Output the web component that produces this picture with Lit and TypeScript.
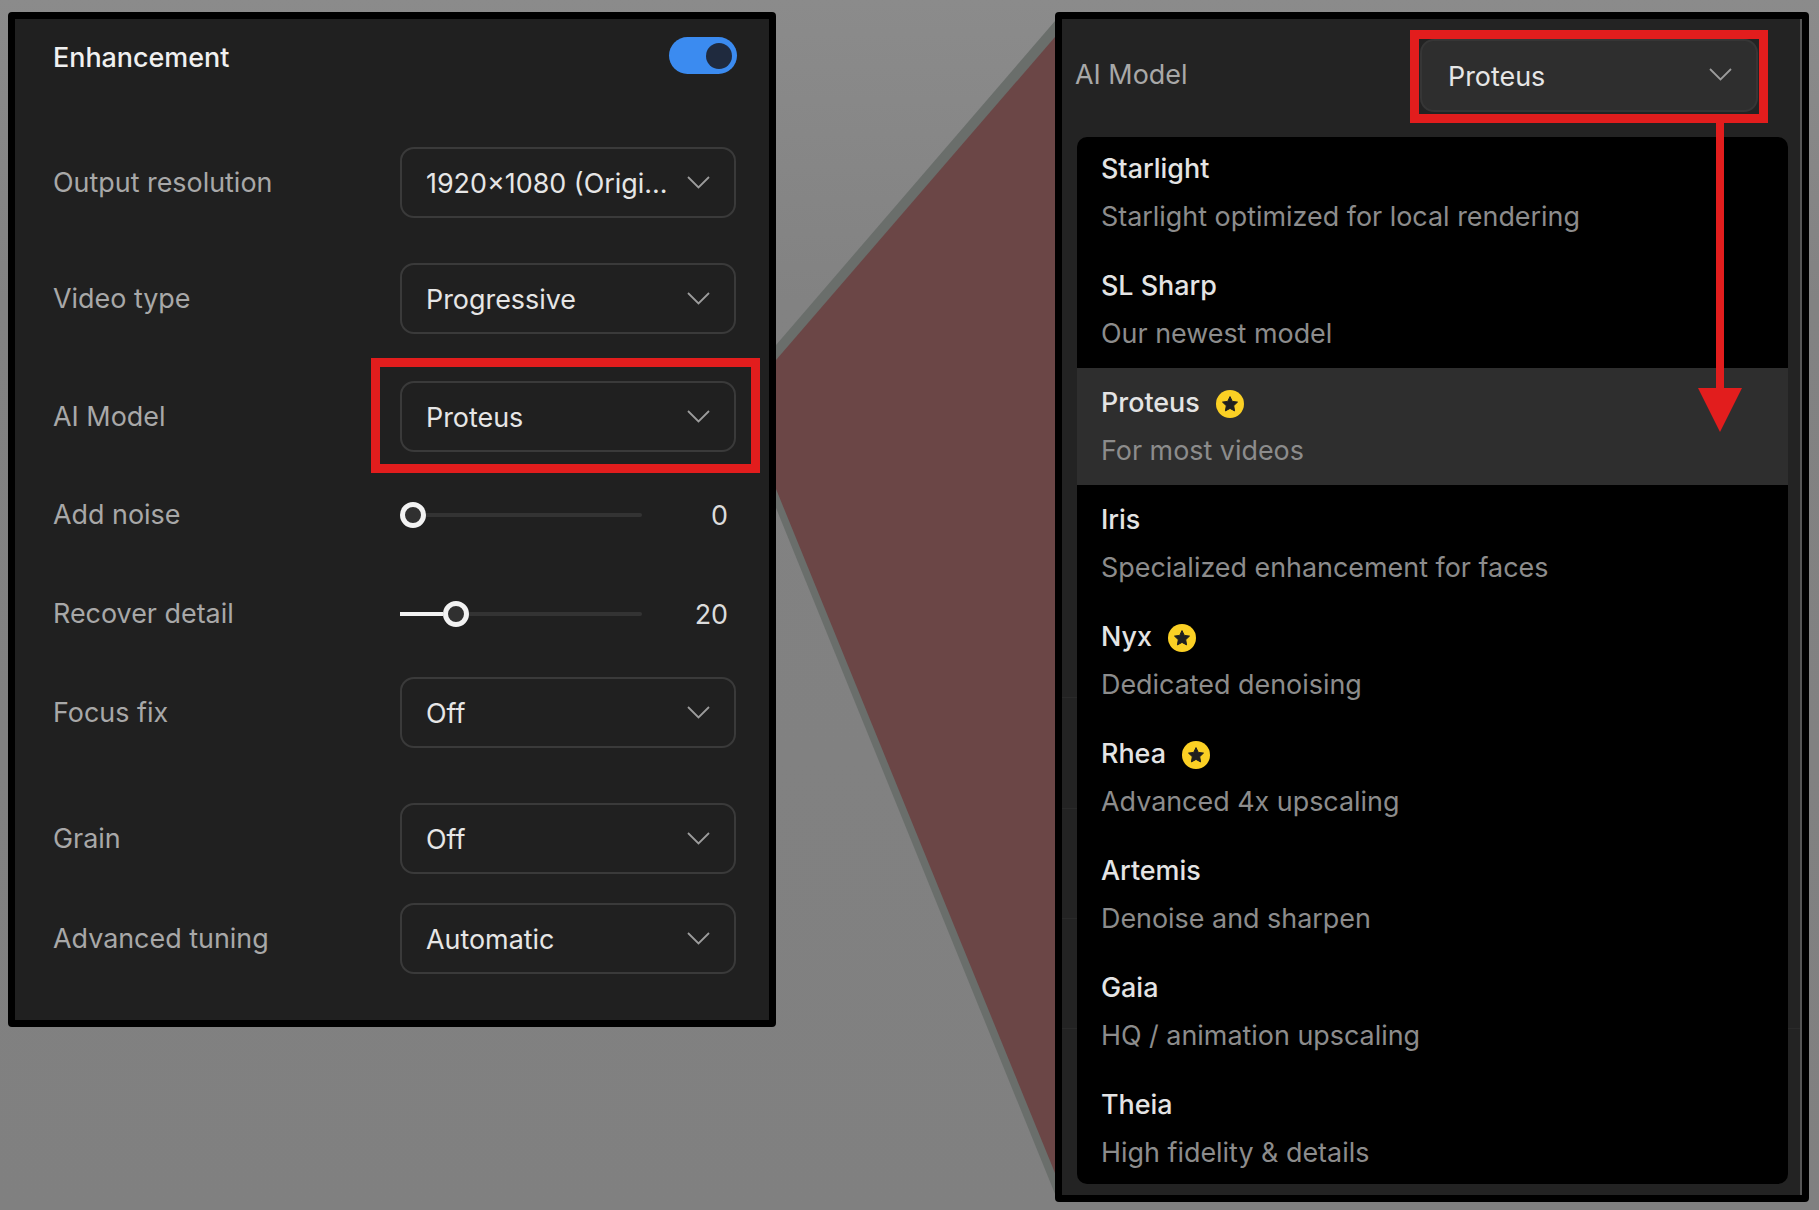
import { LitElement, html, css, svg } from "lit";
import { customElement } from "lit/decorators.js";

const chevron = html`<svg class="chev" viewBox="0 0 23 13" width="23" height="13"><path d="M1 1 L11.5 11.5 L22 1" fill="none" stroke="#9c9c9c" stroke-width="1.8"/></svg>`;
const star = html`<svg class="badge" viewBox="0 0 28 28" width="28" height="28"><circle cx="14" cy="14" r="14" fill="#fbd024"/><path d="M14 6.6l2.3 4.8 5.2.7-3.8 3.6.9 5.2-4.6-2.5-4.6 2.5.9-5.2-3.8-3.6 5.2-.7z" fill="#1f1f1f" stroke="#1f1f1f" stroke-width="1" stroke-linejoin="round"/></svg>`;

type Row = { label: string; value?: string; slider?: number; marked?: boolean };
const rows: Row[] = [
  { label: "Output resolution", value: "1920×1080 (Origi..." },
  { label: "Video type", value: "Progressive" },
  { label: "AI Model", value: "Proteus", marked: true },
  { label: "Add noise", slider: 0 },
  { label: "Recover detail", slider: 20 },
  { label: "Focus fix", value: "Off" },
  { label: "Grain", value: "Off" },
  { label: "Advanced tuning", value: "Automatic" },
];
const models = [
  { t: "Starlight", d: "Starlight optimized for local rendering" },
  { t: "SL Sharp", d: "Our newest model" },
  { t: "Proteus", d: "For most videos", star: true, active: true },
  { t: "Iris", d: "Specialized enhancement for faces" },
  { t: "Nyx", d: "Dedicated denoising", star: true },
  { t: "Rhea", d: "Advanced 4x upscaling", star: true },
  { t: "Artemis", d: "Denoise and sharpen" },
  { t: "Gaia", d: "HQ / animation upscaling" },
  { t: "Theia", d: "High fidelity & details" },
];

@customElement("app-root")
export class AppRoot extends LitElement {
  static styles = css`
    :host {
      display: block; position: relative; width: 1819px; height: 1210px; overflow: hidden;
      background: linear-gradient(#8b8b8b 0, #828282 300px, #808080 100%);
      font-family: Inter, "Liberation Sans", sans-serif; font-size: 26.9px;
    }
    .page { position: relative; display: flex; gap: 279px; padding: 12px 0 0 8px; align-items: flex-start; }
    .connector { position: absolute; inset: 0; }
    .panel { box-sizing: border-box; border: 7px solid #000; border-radius: 4px; background: #202020; }
    .left { width: 768px; height: 1015px; padding: 18px 33px 0 38px; }
    .head { display: flex; justify-content: space-between; align-items: center; height: 37px; margin-right: -1px; }
    .title { color: #f0f0f0; font-weight: 500; margin-top: 2px; }
    .toggle { width: 68px; height: 37px; border-radius: 19px; background: #3b8bf0; display: flex; align-items: center; justify-content: flex-end; padding-right: 5px; box-sizing: border-box; }
    .knob { width: 26px; height: 26px; border-radius: 50%; background: #1f2a3e; }
    .row { display: grid; grid-template-columns: 1fr 336px; align-items: center; }
    .row:nth-of-type(2) { margin-top: 73px; }
    .row:nth-of-type(3) { margin-top: 45px; }
    .row:nth-of-type(4) { margin-top: 47px; }
    .row:nth-of-type(5) { margin-top: 50px; }
    .row:nth-of-type(6) { margin-top: 73px; }
    .row:nth-of-type(7) { margin-top: 50px; }
    .row:nth-of-type(8) { margin-top: 55px; }
    .row:nth-of-type(9) { margin-top: 29px; }
    .label { color: #a8a8a8; margin-top: -2px; line-height: 26px; }
    .select {
      position: relative; box-sizing: border-box; height: 71px; border: 2px solid #3a3a3a; border-radius: 14px;
      display: flex; align-items: center; justify-content: space-between; padding: 1px 24px 0 24px; color: #e6e6e6;
    }
    .chev { margin-top: -2px; flex: none; }
    .mark { position: absolute; left: -31px; right: -26px; top: -25px; bottom: -23px; border: 9px solid #e21d1d; pointer-events: none; }
    .slider { display: flex; align-items: center; justify-content: space-between; height: 26px; padding-right: 8px; }
    .track { position: relative; width: 242px; height: 4px; background: #333; border-radius: 2px; }
    .fill { position: absolute; left: 0; top: 0; height: 4px; background: #f2f2f2; }
    .thumb { position: absolute; top: -11px; box-sizing: border-box; width: 26px; height: 26px; border: 5px solid #f2f2f2; border-radius: 50%; background: #303030; }
    .num { color: #dcdcdc; }
    .right { position: relative; width: 754px; height: 1190px; padding: 20px 0 0 0;
      background:
        linear-gradient(#2a2a2a, #2a2a2a) 0 678px / 15px 1px no-repeat,
        linear-gradient(#2a2a2a, #2a2a2a) 0 789px / 15px 1px no-repeat,
        linear-gradient(#2a2a2a, #2a2a2a) 0 899px / 15px 1px no-repeat,
        linear-gradient(#2a2a2a, #2a2a2a) 0 1009px / 15px 1px no-repeat,
        linear-gradient(#2a2a2a, #2a2a2a) 100% 1009px / 15px 1px no-repeat,
        #232323;
    }
    .strip { position: absolute; top: 0; bottom: 0; right: 0; width: 2px; background: #555; }
    .rhead { display: flex; justify-content: space-between; align-items: center; padding: 0 44px 0 13px; }
    .rhead .select { width: 338px; height: 73px; background: #2e2e2e; border-color: #363636; padding-left: 26px; padding-top: 0; }
    .rhead .label { margin-top: -4px; }
    .arrowbox { position: absolute; left: -12px; right: -12px; top: -11px; bottom: -13px; border: 9px solid #e21d1d; }
    .arrow { position: absolute; left: 274px; top: 82px; z-index: 1; }
    .menu { margin: 25px 14px 0 15px; background: #000; border-radius: 10px; height: 1047px; overflow: hidden; position: relative; }
    .item { height: 117px; box-sizing: border-box; padding: 14px 21px 0 24px; display: flex; flex-direction: column; }
    .item:first-child { height: 114px; padding-top: 11px; }
    .item.active { background: #2e2e2e; }
    .name { display: flex; align-items: center; gap: 16px; height: 40px; color: #e4e4e4; font-weight: 500; }
    .badge { margin-top: 4px; }
    .desc { margin-top: 8px; height: 40px; line-height: 41px; color: #8c8c8c; }
  `;

  private connector() {
    return html`<svg class="connector" width="1819" height="1210" viewBox="0 0 1819 1210">
      ${svg`<polygon points="776,345 1055,21 1055,1194 776,508" fill="#6a6e6b"/>
      <polygon points="776,360 1055,37 1055,1173 776,489" fill="#6b4646"/>`}
    </svg>`;
  }

  private renderRow(r: Row) {
    return html`<div class="row">
      <div class="label">${r.label}</div>
      ${r.slider !== undefined
        ? html`<div class="slider">
            <div class="track">
              <div class="fill" style="width:${(r.slider / 100) * 215}px"></div>
              <div class="thumb" style="left:${(r.slider / 100) * 215}px"></div>
            </div>
            <div class="num">${r.slider}</div>
          </div>`
        : html`<div class="select"><span>${r.value}</span>${chevron}${r.marked ? html`<div class="mark"></div>` : ""}</div>`}
    </div>`;
  }

  render() {
    return html`
      ${this.connector()}
      <div class="page">
        <section class="panel left">
          <div class="head"><div class="title">Enhancement</div><div class="toggle"><div class="knob"></div></div></div>
          ${rows.map((r) => this.renderRow(r))}
        </section>
        <section class="panel right">
          <div class="strip"></div>
          <div class="rhead">
            <div class="label">AI Model</div>
            <div class="select"><span>Proteus</span>${chevron}
              <div class="arrowbox"></div>
              <svg class="arrow" width="48" height="320" viewBox="0 0 48 320">
                <rect x="20" y="0" width="8" height="270" fill="#e21d1d"/>
                <polygon points="2,265 46,265 24,309" fill="#e21d1d"/>
              </svg>
            </div>
          </div>
          <div class="menu">
            ${models.map((m) => html`<div class="item ${m.active ? "active" : ""}">
              <div class="name"><span>${m.t}</span>${m.star ? star : ""}</div>
              <div class="desc">${m.d}</div>
            </div>`)}
          </div>
        </section>
      </div>`;
  }
}
